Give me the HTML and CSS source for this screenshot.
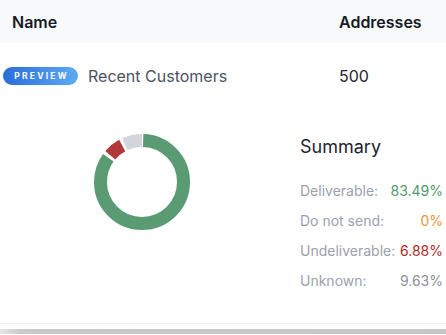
FILE: index.html
```html
<!DOCTYPE html>
<html>
<head>
<meta charset="utf-8">
<link rel="stylesheet" href="styles.css">
</head>
<body>
<div class="table">
  <div class="head">
    <div class="col-name">Name</div>
    <div class="col-addr">Addresses</div>
  </div>
  <div class="row">
    <div class="col-name row-name">
      <span class="badge">PREVIEW</span>
      <span class="list-name">Recent Customers</span>
    </div>
    <div class="col-addr count">500</div>
  </div>
  <div class="details">
    <div class="chart">
      <svg class="donut" width="96" height="96" viewBox="0 0 96 96">
        <g transform="rotate(-90 48 48)">
          <circle cx="48" cy="48" r="41.5" fill="none" stroke="#5b9b74" stroke-width="13" stroke-dasharray="219.9 400" stroke-dashoffset="-1.2"/>
          <circle cx="48" cy="48" r="41.5" fill="none" stroke="#b13a38" stroke-width="13" stroke-dasharray="15.4 400" stroke-dashoffset="-224.3"/>
          <circle cx="48" cy="48" r="41.5" fill="none" stroke="#d3d6dd" stroke-width="13" stroke-dasharray="22.9 400" stroke-dashoffset="-242.6"/>
        </g>
      </svg>
    </div>
    <div class="summary">
      <div class="summary-title">Summary</div>
      <div class="stat"><span class="label">Deliverable:</span><span class="val green">83.49%</span></div>
      <div class="stat"><span class="label">Do not send:</span><span class="val orange">0%</span></div>
      <div class="stat"><span class="label">Undeliverable:</span><span class="val red">6.88%</span></div>
      <div class="stat"><span class="label">Unknown:</span><span class="val gray">9.63%</span></div>
    </div>
  </div>
  <div class="bar"></div>
</div>
</body>
</html>
```
FILE: styles.css
```css
html, body {
  margin: 0;
  padding: 0;
  background: #ffffff;
  font-family: Inter, "Noto Sans", sans-serif;
}
.table {
  width: 446px;
}
.head {
  height: 43px;
  background: #f8f9fb;
  display: grid;
  grid-template-columns: 327px 1fr;
  align-items: center;
  padding-left: 12px;
  font-size: 16px;
  font-weight: 600;
  color: #161b26;
}
.row {
  height: 66px;
  display: grid;
  grid-template-columns: 336px 1fr;
  align-items: center;
  padding-left: 3px;
}
.row-name {
  display: flex;
  align-items: center;
  gap: 10px;
}
.badge {
  display: inline-flex;
  align-items: center;
  justify-content: center;
  width: 75px;
  height: 18px;
  border-radius: 9px;
  background: linear-gradient(to right, #2a6ddb, #5eaaf0);
  color: #ffffff;
  font-size: 8.5px;
  font-weight: 700;
  letter-spacing: 2.2px;
  padding-left: 2px;
  box-sizing: border-box;
}
.list-name {
  font-size: 16px;
  color: #4b5263;
}
.count {
  font-size: 16px;
  color: #1f2633;
}
.details {
  display: grid;
  grid-template-columns: 284px 1fr;
  height: 214px;
  border-bottom: 1px solid #f1f1f3;
}
.chart {
  display: flex;
  justify-content: center;
  padding-top: 25px;
}
.donut {
  display: block;
}
.summary {
  padding-left: 16px;
  padding-right: 3px;
  padding-top: 26px;
}
.summary-title {
  font-size: 18px;
  line-height: 24px;
  color: #1e2433;
  margin-bottom: 17px;
}
.stat {
  display: flex;
  justify-content: space-between;
  font-size: 14px;
  line-height: 30px;
}
.label {
  color: #9aa1ae;
}
.val.green { color: #4f9a6a; }
.val.orange { color: #f29432; }
.val.red { color: #b42a2a; }
.val.gray { color: #8c919b; }
.bar {
  margin-top: 5px;
  height: 5px;
  background: linear-gradient(to right, #e6e6e6 0, #c9c9c9 20px, #c6c6c6 100%);
}
```
